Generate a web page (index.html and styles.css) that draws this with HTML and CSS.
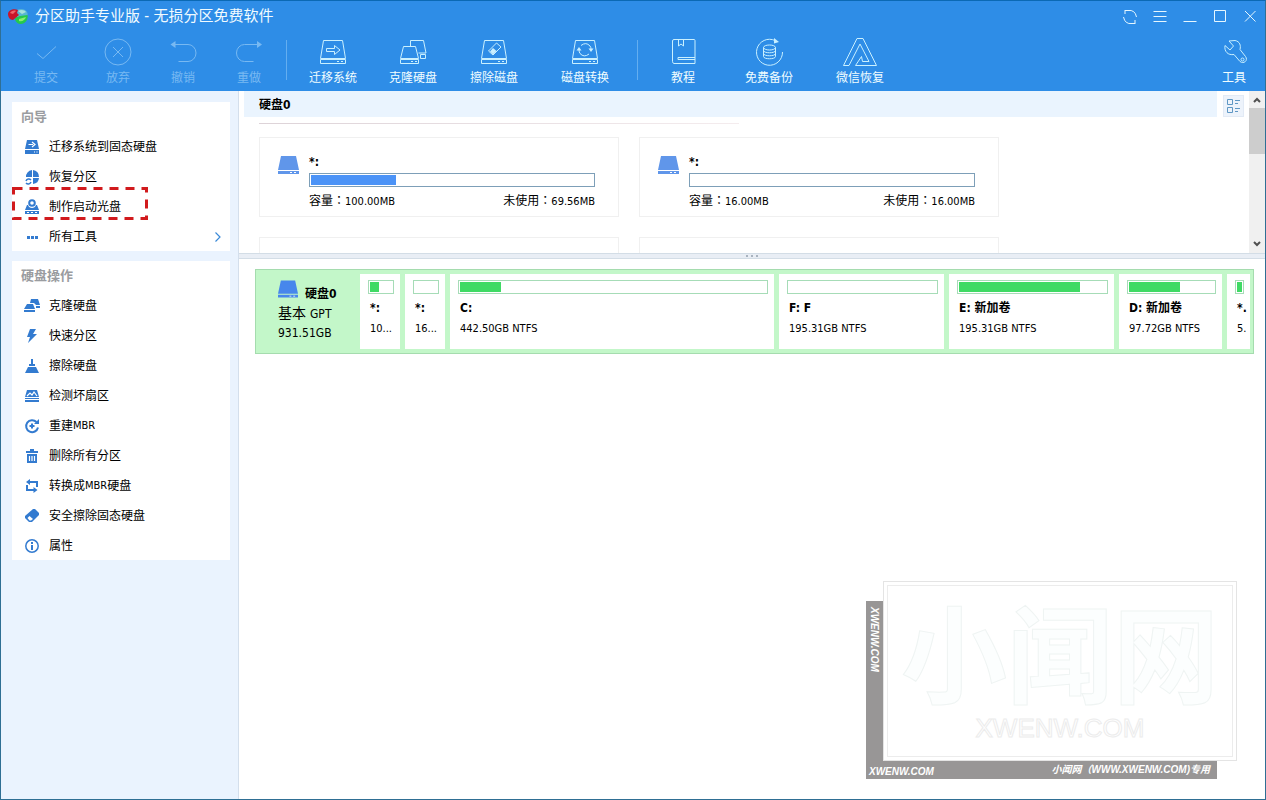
FILE: index.html
```html
<!DOCTYPE html>
<html lang="zh-CN">
<head>
<meta charset="utf-8">
<title>分区助手专业版 - 无损分区免费软件</title>
<link rel="stylesheet" href="styles.css">
</head>
<body>
<svg class="defs" aria-hidden="true">
  <symbol id="drive" viewBox="0 0 21 18"><path d="M3 0h15l3 14H0zM0 15h21v3H0z"/><path d="M12 16h2v1h-2zM16 16h2v1h-2z" fill="#fff"/></symbol>
  <symbol id="tray" viewBox="0 0 28 28"><path d="M4.500 2.500h19l3 18h-25zM1.500 21.500h25v4h-25zM18 23.500h2M22 23.500h2"/></symbol>
</svg>
<div class="window">
  <header class="header">
    <div class="titlebar">
      <svg class="logo" viewBox="0 0 20 16"><path d="M7 4c2-4 11-4 12.500 1 .5 3-1 5-3 5L9 9z" fill="#58b6d4"/><path d="M10 3c3-2 7-1 8 1l-4 2z" fill="#a8e2dc"/><path d="M7 10l5-2 7.500-1c1 4-2 9-6.500 9-3 0-6-2-6-6z" fill="#25c94c"/><path d="M11 11l7-2c-1 3-4 5-7 4z" fill="#8aef72"/><path d="M0 6c0-4 6-6 10-4l-1 3 2 2-6 5C2 12 0 9 0 6z" fill="#c9152a"/><path d="M2 5c1-2 4-3 6-2L5 6z" fill="#f0656b"/></svg>
      <h1 class="title">分区助手专业版 - 无损分区免费软件</h1>
      <div class="winbtns">
        <button aria-label="刷新"><svg viewBox="0 0 16 16"><path d="M3 1v4M3 1.500h4M13 15v-4M13 14.500H9M6 1.500q7-1 8.500 6.500M10 14.500Q3 15.500 1.500 8"/></svg></button>
        <button aria-label="菜单"><svg viewBox="0 0 16 16"><path d="M1.500 2.500h13M1.500 7.500h13M1.500 12.500h13"/></svg></button>
        <button aria-label="最小化"><svg viewBox="0 0 16 16"><path d="M1.500 12.500h13"/></svg></button>
        <button aria-label="最大化"><svg viewBox="0 0 16 16"><path d="M2.500 1.500h11v11h-11z"/></svg></button>
        <button aria-label="关闭"><svg viewBox="0 0 16 16"><path d="M3 2l10.500 10.500M13.500 2L3 12.500"/></svg></button>
      </div>
    </div>
    <nav class="toolbar">
      <button class="tool" disabled><svg viewBox="0 0 28 28"><path d="M5 15.500l6 5L24 8.500"/></svg>提交</button>
      <button class="tool" disabled><svg viewBox="0 0 28 28"><circle cx="14" cy="14" r="13"/><path d="M9 9l10 10M19 9L9 19"/></svg>放弃</button>
      <button class="tool" disabled><svg viewBox="0 0 28 28"><path d="M5 6.500h14a8 8.500 0 0 1 0 17H9.500"/><path class="solid" d="M1.500 6.500l5-3.500v7z"/></svg>撤销</button>
      <button class="tool" disabled><svg viewBox="0 0 28 28"><path d="M23 6.500H9.500a8 8.500 0 0 0 0 17h9"/><path class="solid" d="M27 6.500l-5-3.500v7z"/></svg>重做</button>
      <span class="sep"></span>
      <button class="tool"><svg viewBox="0 0 28 28"><use href="#tray"/><path d="M7.500 10.500h8v-3l5.500 4.500-5.500 4.500v-3h-8z"/></svg>迁移系统</button>
      <button class="tool"><svg viewBox="0 0 28 28"><path d="M4.500 8.500h12l3 12h-18zM1.500 21.500h18v4h-18zM12 23.500h2M16 23.500h2M11.500 8V2.500h13l2.500 12.500h-7.500M21.500 16.500h5v4h-5z"/></svg>克隆硬盘</button>
      <button class="tool"><svg viewBox="0 0 28 28"><use href="#tray"/><path d="M8.500 13l8-8 4.500 4-8 8z"/><path class="solid" d="M10 13.500l3-3.500 3.500 3-3.500 3.500z"/></svg>擦除磁盘</button>
      <button class="tool"><svg viewBox="0 0 28 28"><use href="#tray"/><path d="M10 7.500q5-4 9 .5 1 1 1 3M18 16q-5 4-9-.500-1-1-1-4"/><path class="solid" d="M5.500 12.500h5L8 9zM17.500 10.500h5L20 14z"/></svg>磁盘转换</button>
      <span class="sep"></span>
      <button class="tool"><svg viewBox="0 0 28 28"><path d="M5 1.500h20a1 1 0 0 1 1 1V25.500H5a2 2 0 0 1-1.500-2v-20.500a1.500 1.500 0 0 1 1.500-1.500zM9.500 2v6l2.500-2 2.500 2V2M26 19.500H9v2h17"/></svg>教程</button>
      <button class="tool"><svg viewBox="0 0 28 28"><path d="M20 2.500A13 13 0 1 0 27.500 14"/><path class="solid" d="M19 0l5 4-5 1.500z"/><ellipse cx="14.500" cy="9.500" rx="6" ry="2.500"/><path d="M8.500 9.500v9c0 3 12 3 12 0v-9M8.500 12.500c0 3 12 3 12 0M8.500 15.500c0 3 12 3 12 0"/></svg>免费备份</button>
      <button class="tool"><svg class="wide" viewBox="0 0 34 28"><path d="M.5 27.500L14 .5h6l13.500 27H12.500l6-9 1 5H26L17 6 6 27.500z"/></svg>微信恢复</button>
      <span></span>
      <button class="tool"><svg viewBox="0 0 28 28"><path d="M9 3l6-.5c5 1 6 5 5 9l5.500 7c3 4-2 8-5.500 5l-6-7c-6 1-10-3-9-9l5 4.500 3.500-4z"/><circle cx="22.500" cy="21.500" r="1.500"/></svg>工具</button>
    </nav>
  </header>
  <div class="body">
    <aside class="sidebar">
      <section class="panel">
        <h2>向导</h2>
        <button class="item"><svg viewBox="0 0 14 14"><path class="f" d="M2 0h10l2 9H0zM0 10h14v4H0z"/><path class="w" d="M3.500 4.500H8M7 2l3 2.500L7 7M9 12h1M11.500 12h1"/></svg>迁移系统到固态硬盘</button>
        <button class="item"><svg viewBox="0 0 14 14"><path class="f" d="M7 0v7H1a7 6.500 0 0 1 6-7zM8 0a6.500 6.500 0 0 1 6 7H8zM8 8h6a7 6.500 0 0 1-6 6z"/><path class="s" d="M1 11a3 3 0 0 1 5-1M6 12a3 3 0 0 1-5 1"/></svg>恢复分区</button>
        <button class="item"><svg viewBox="0 0 14 14"><circle class="s2" cx="7" cy="3" r="2.800"/><path class="f" d="M2 5h1c1 4 7 4 8 0h1l2 5H0zM0 11h14v3H0z"/><path class="w" d="M2 12.500h2M6 12.500h2M10 12.500h2"/></svg>制作启动光盘<svg class="marker" viewBox="0 0 136 33"><rect x="1.500" y="1.500" width="133" height="30"/></svg></button>
        <button class="item"><svg viewBox="0 0 14 14"><path class="f" d="M2 6h3v3H2zM6 6h3v3H6zM10 6h3v3h-3z"/></svg>所有工具<svg class="chevron" viewBox="0 0 8 12"><path class="thin" d="M1.500 1.500L6 6l-4.500 4.500"/></svg></button>
      </section>
      <section class="panel">
        <h2>硬盘操作</h2>
        <button class="item"><svg viewBox="0 0 14 14"><path class="f" d="M6 0h7l2 6h-4L9 4H5zM11 7h4v2h-4zM2 5h6l2 5H-1zM-1 11h11v2H-1z"/></svg>克隆硬盘</button>
        <button class="item"><svg viewBox="0 0 14 14"><path class="f" d="M5 0h6L8 5h4L3 14l2-6H2z"/></svg>快速分区</button>
        <button class="item"><svg viewBox="0 0 14 14"><path class="f" d="M6 0h2v5h2v2H4V5h2zM3 8h8l3 6H0z"/></svg>擦除硬盘</button>
        <button class="item"><svg viewBox="0 0 14 14"><path class="f" d="M2 1h10l2 7H0zM0 9h14v1H0zM0 11h14v2H0z"/><path class="w" d="M2 7l3-3 2 2 2-3 3 4"/></svg>检测坏扇区</button>
        <button class="item"><svg viewBox="0 0 14 14"><path class="s2" d="M11.500 3A6 6 0 1 0 13 8.500M7 4.500v5M4.500 7h5"/><path class="f" d="M14 0v5H9z"/></svg>重建<span class="latin">MBR</span></button>
        <button class="item"><svg viewBox="0 0 14 14"><path class="f" d="M1 2h4V0h4v2h4v2H1zM2 5h10v9H2z"/><path class="w" d="M4.500 7v5M7 7v5M9.500 7v5"/></svg>删除所有分区</button>
        <button class="item"><svg viewBox="0 0 14 14"><path class="s2" d="M4 3h8v5M2 6v5h7"/><path class="f" d="M5 0v6L1 3zM8.500 8v6l4-3z"/></svg>转换成<span class="latin">MBR</span>硬盘</button>
        <button class="item"><svg viewBox="0 0 14 14"><path class="f" d="M8 0h2l4 4v2l-7 7H4L0 9V7z"/><path d="M4.500 7L8 10l-2 1.500H4.500L2.500 9z" fill="#fff"/></svg>安全擦除固态硬盘</button>
        <button class="item"><svg viewBox="0 0 14 14"><circle class="s" cx="7" cy="7" r="6.200"/><path class="f" d="M6 3h2v2H6zM6 6h2v5H6z"/></svg>属性</button>
      </section>
    </aside>
    <main class="main">
      <section class="disks">
        <div class="disklist">
          <h2 class="diskname">硬盘0</h2>
          <div class="rule"></div>
          <div class="cards">
            <article class="card">
              <svg class="drive"><use href="#drive"/></svg>
              <div class="cardbody">
                <b>*:</b>
                <div class="bar blue"><i style="width:30%"></i></div>
                <p><span>容量<span class="colon" lang="zh-TW">：</span><span class="latin">100.00MB</span></span><span>未使用<span class="colon" lang="zh-TW">：</span><span class="latin">69.56MB</span></span></p>
              </div>
            </article>
            <article class="card">
              <svg class="drive"><use href="#drive"/></svg>
              <div class="cardbody">
                <b>*:</b>
                <div class="bar blue"></div>
                <p><span>容量<span class="colon" lang="zh-TW">：</span><span class="latin">16.00MB</span></span><span>未使用<span class="colon" lang="zh-TW">：</span><span class="latin">16.00MB</span></span></p>
              </div>
            </article>
            <article class="card"></article>
            <article class="card"></article>
          </div>
        </div>
        <div class="viewcol"><button class="view" aria-label="视图"><svg viewBox="0 0 14 14"><path d="M.5.5h5v5h-5zM.5 8.500h5v5h-5zM8 1.500h5M8 4.500h3M8 9.500h5M8 12.500h3"/></svg></button></div>
        <div class="scroll">
          <svg viewBox="0 0 8 6"><path d="M1 5l3-3 3 3"/></svg>
          <div class="thumb"></div>
          <svg viewBox="0 0 8 6"><path d="M1 1l3 3 3-3"/></svg>
        </div>
      </section>
      <div class="splitter"><i></i><i></i><i></i></div>
      <section class="map">
        <div class="info">
          <div class="inforow"><svg class="drive"><use href="#drive"/></svg><b>硬盘0</b></div>
          <div class="type">基本 <span>GPT</span></div>
          <div class="total">931.51GB</div>
        </div>
        <div class="part tiny"><div class="bar"><i style="width:41%"></i></div><b>*:</b><p>10...</p></div>
        <div class="part tiny"><div class="bar"></div><b>*:</b><p>16...</p></div>
        <div class="part" style="flex-grow:310"><div class="bar"><i style="width:13.500%"></i></div><b>C:</b><p>442.50GB NTFS</p></div>
        <div class="part" style="flex-grow:151"><div class="bar"></div><b>F: F</b><p>195.31GB NTFS</p></div>
        <div class="part" style="flex-grow:151"><div class="bar"><i style="width:82%"></i></div><b>E: 新加卷</b><p>195.31GB NTFS</p></div>
        <div class="part" style="flex-grow:89"><div class="bar"><i style="width:60%"></i></div><b>D: 新加卷</b><p>97.72GB NTFS</p></div>
        <div class="part last"><div class="bar"><i style="width:100%"></i></div><b>*.</b><p>5.</p></div>
      </section>
    </main>
  </div>
  <div class="stamp">
    <div class="side">XWENW.COM</div>
    <div class="face"><div class="frame"><div class="big">小闻网</div><div class="url">XWENW.COM</div></div></div>
    <div class="foot"><span>XWENW.COM</span><span class="owner">小闻网（WWW.XWENW.COM)专用</span></div>
  </div>
</div>
</body>
</html>
```
FILE: styles.css
```css
* { box-sizing: border-box; }
body, h1, h2, p { margin: 0; font-weight: normal; }
body { font: 12px/16px "DejaVu Sans Condensed", "Noto Sans CJK SC", sans-serif; color: #000; background: #fff; }
button { font: inherit; color: inherit; border: 0; padding: 0; background: none; }
svg { display: block; flex: none; }
.defs { position: absolute; width: 0; height: 0; }
.window { position: relative; display: flex; flex-direction: column; height: 100vh; overflow: hidden; border: 1px solid #2f6f94; border-top-color: #0b69b4; }
.latin { font-size: 11px; }
.colon { font-family: "Noto Sans CJK TC", sans-serif; }

.header { background: #2e8de7; color: #fff; }
.titlebar { display: flex; align-items: center; height: 30px; padding: 0 7px; }
.logo { width: 20px; height: 16px; }
.title { margin-left: 7px; font-size: 15px; line-height: 20px; color: #f1fbff; }
.winbtns { display: flex; gap: 14px; margin-left: auto; padding-top: 2px; }
.winbtns svg { width: 16px; height: 16px; fill: none; stroke: #e6f7ff; }
.toolbar { display: grid; grid-template-columns: 72px 72px 58px 74px 1px 92px 68px 94px 96px 1px 90px 82px 100px 1fr 62px; margin-left: -1px; height: 60px; padding-left: 10px; }
.tool { display: flex; flex-direction: column; align-items: center; gap: 4px; padding-top: 7px; line-height: 16px; color: #f1fdff; white-space: nowrap; }
.tool:nth-of-type(8) { padding-right: 8px; }
.tool svg { width: 28px; height: 28px; fill: none; stroke: #c9f0ff; }
.tool svg.wide { width: 34px; }
.tool .solid { fill: #c9f0ff; stroke: none; }
.tool:disabled { color: #78b9f2; }
.tool:disabled svg { stroke: #78b9f2; }
.tool:disabled .solid { fill: #78b9f2; }
.sep { height: 40px; margin-top: 9px; background: #64aef0; }

.body { display: flex; flex: 1; min-height: 0; }
.sidebar { flex: none; width: 238px; padding: 11px 8px 0 11px; background: #eaf3fe; border-right: 1px solid #d4dfec; }
.panel { margin-bottom: 10px; background: #fff; }
.panel h2 { height: 29px; padding-left: 9px; font-size: 13px; line-height: 30px; font-weight: bold; color: #9a9ca0; }
.item { position: relative; display: flex; align-items: center; width: 100%; height: 30px; padding: 2px 0 0 13px; text-align: left; }
.item > svg:first-child { width: 14px; height: 14px; margin: -1px 10px 0 0; overflow: visible; }
.item svg { fill: none; }
.item .f { fill: #337bd0; }
.item .s { stroke: #337bd0; stroke-width: 1.500; }
.item .s2 { stroke: #337bd0; stroke-width: 2; }
.item .w { stroke: #fff; stroke-width: 1.200; }
.item .thin { stroke: #3b8ad8; stroke-width: 1.200; }
.chevron { width: 8px; height: 12px; margin: 0 8px 0 auto; }
.marker { position: absolute; left: 0; top: -4px; width: 136px; height: 33px; }
.marker rect { stroke: #d11a1d; stroke-width: 3; stroke-dasharray: 9 7; }

.main { display: flex; flex-direction: column; flex: 1; min-width: 0; }
.disks { display: flex; height: 162px; overflow: hidden; padding-left: 5px; }
.disklist { flex: 1; min-width: 0; }
.diskname { height: 26px; padding-left: 15px; font-size: 12px; line-height: 28px; font-weight: bold; background: #eaf4fe; }
.rule { height: 1px; width: 480px; margin: 6px 0 13px 15px; background: linear-gradient(to right, #ddd3d8, #f4ecee); }
.cards { display: flex; flex-wrap: wrap; gap: 20px; margin-left: 15px; }
.card { display: flex; width: 360px; height: 80px; padding: 16px 23px 0 18px; border: 1px solid #f0f0f0; }
.drive { width: 21px; height: 18px; margin-top: 2px; fill: #6096ea; }
.cardbody { flex: 1; margin-left: 10px; }
.cardbody b { display: block; height: 19px; font-size: 12px; }
.cardbody p { display: flex; justify-content: space-between; margin-top: 5px; }
.bar { height: 14px; padding: 1px; border: 1px solid #a6dcb7; background: #fff; }
.bar i { display: block; height: 10px; background: #3fda64; }
.bar.blue { border-color: #7d9fb8; }
.bar.blue i { background: #4b93f7; }
.viewcol { width: 32px; padding: 4px 0 0 6px; }
.view { display: flex; align-items: center; justify-content: center; width: 21px; height: 22px; background: #edf3fb; border: 1px solid #e2eaf5; }
.view svg { width: 14px; height: 14px; fill: none; stroke: #5f97c4; }
.scroll { display: flex; flex-direction: column; align-items: center; width: 16px; padding: 6px 0; background: #f0f0f0; }
.scroll svg { width: 8px; height: 6px; fill: none; stroke: #505050; stroke-width: 2; }
.scroll svg:last-child { margin-top: auto; }
.thumb { width: 100%; height: 46px; margin-top: 5px; background: #cdcdcd; }
.splitter { display: flex; align-items: center; justify-content: center; gap: 3px; height: 6px; background: #e9eef5; border: 1px solid #d3dde6; border-width: 1px 0; }
.splitter i { width: 2px; height: 2px; background: #a9b3bf; }

.map { display: flex; gap: 5px; margin: 10px 11px 0 16px; padding: 4px 3px 4px 0; background: #c3f7c9; border: 1px solid #a5dcae; }
.info { flex: none; width: 99px; padding: 4px 0 0 22px; }
.inforow { display: flex; gap: 7px; }
.inforow .drive { width: 20px; fill: #4787ec; }
.inforow b { padding-top: 8px; white-space: nowrap; }
.type { font-size: 14px; line-height: 22px; white-space: nowrap; }
.type span { font-size: 12px; }
.total { line-height: 16px; }
.part { flex: 1 1 0; min-width: 0; height: 75px; padding: 6px 6px 0 8px; background: #fff; white-space: nowrap; overflow: hidden; }
.part b { display: block; margin-top: 6px; padding-left: 2px; font-size: 12px; }
.part p { margin-top: 5px; padding-left: 2px; font-size: 11px; }
.part.tiny { flex: none; width: 40px; }
.part.last { flex: none; width: 23px; }

.stamp { position: absolute; right: 28px; bottom: 20px; display: grid; grid-template-columns: 17px 354px; grid-template-rows: 180px 18px; font: italic bold 10px/18px "Liberation Sans", "Noto Sans CJK SC", sans-serif; color: #fff; }
.side { margin-top: 20px; padding-top: 6px; background: #989696; writing-mode: vertical-rl; line-height: 17px; }
.face { padding: 3px; background: #fff; border: 1px solid #e4e4e4; }
.frame { height: 100%; border: 1px solid #ececec; text-align: center; font-style: normal; }
.big { padding-top: 18px; font-size: 106px; line-height: 108px; color: #fcfefe; -webkit-text-stroke: 1px #eff4f3; }
.url { font-size: 26px; line-height: 32px; font-weight: normal; color: #fff; -webkit-text-stroke: 1px #ececec; }
.foot { grid-column: 1 / 3; display: flex; justify-content: space-between; margin-right: 20px; padding: 0 7px 0 3px; background: #989696; }
.foot span { padding-top: 3px; line-height: 16px; }
.foot .owner { padding-top: 1px; }
```
